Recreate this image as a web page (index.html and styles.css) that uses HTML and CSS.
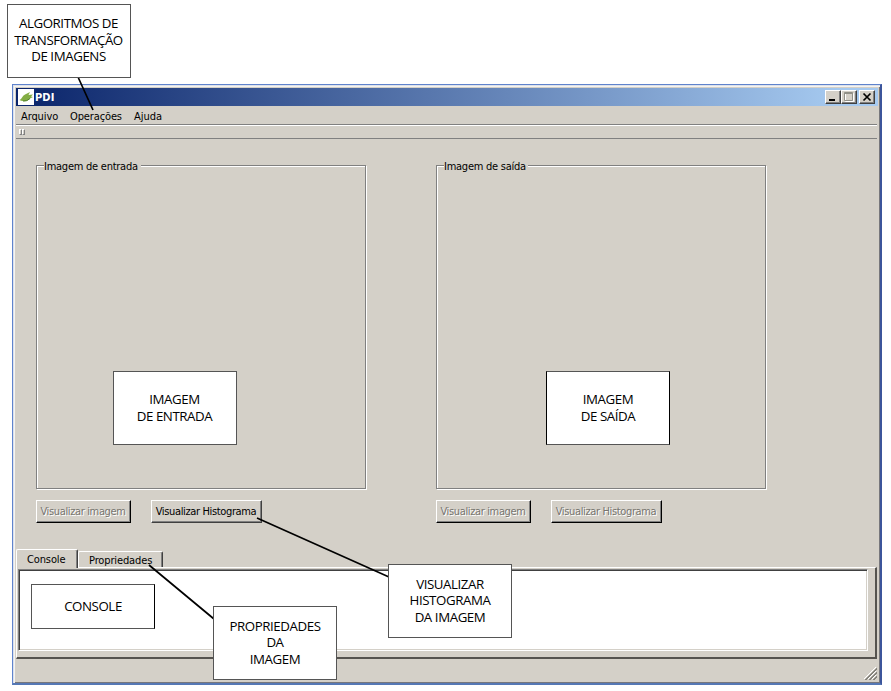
FILE: index.html
```html
<!DOCTYPE html>
<html lang="pt-BR">
<head>
<meta charset="utf-8">
<title>PDI</title>
<link rel="stylesheet" href="styles.css">
</head>
<body>
<main class="window">
  <header class="titlebar">
    <svg class="logo" width="16" height="16" viewBox="0 0 16 16"><rect width="16" height="16" fill="#fff"/><path d="M1.5 11C4 10 4 7 7 5.5L12 3L10.5 6L15 5.5L13 7.5L15 8L12 9.5C10 12 8 12.5 5 12Q3 12 1.5 11Z" fill="#83ad43"/><path d="M5 12Q9 12.5 12 9.5" fill="none" stroke="#52812d"/></svg>
    <span class="title">PDI</span>
    <div class="controls">
      <span class="ctl"><svg width="14" height="12"><path d="M3 9H9" stroke="#000" stroke-width="2"/></svg></span>
      <span class="ctl"><svg width="14" height="12" fill="none"><path d="M3 2.5H11.5V10.5H3.5V2" stroke="#fff"/><path d="M2.5 1.5H10.5V9.5H2.5ZM2 2.5H11" stroke="#919088"/></svg></span>
      <span class="ctl close"><svg width="14" height="12"><path d="M3.5 2.5L10.5 9.5M10.5 2.5L3.5 9.5" stroke="#000" stroke-width="1.7"/></svg></span>
    </div>
  </header>
  <nav class="menu"><span class="m1">Arquivo</span><span class="m2">Operações</span><span class="m3">Ajuda</span></nav>
  <div class="toolbar"><i></i><i></i></div>
  <section class="workspace">
    <div class="column">
      <div class="group"><span class="legend in">Imagem de entrada</span></div>
      <div class="actions"><button class="view off" disabled>Visualizar imagem</button><button class="hist">Visualizar Histograma</button></div>
    </div>
    <div class="column">
      <div class="group"><span class="legend out">Imagem de saída</span></div>
      <div class="actions"><button class="view off" disabled>Visualizar imagem</button><button class="hist off" disabled>Visualizar Histograma</button></div>
    </div>
  </section>
  <div class="tabs"><span class="tab active">Console</span><span class="tab second">Propriedades</span></div>
  <section class="panel"><div class="output"></div></section>
  <footer class="status"><svg width="13" height="13" viewBox="0 0 13 13"><path d="M0 12L12 0M4 12L12 4M8 12L12 8" stroke="#fff" stroke-width="1"/><path d="M1 13L13 1M2 13L13 2M5 13L13 5M6 13L13 6M9 13L13 9M10 13L13 10" stroke="#85837c" stroke-width="1"/></svg></footer>
</main>
<svg class="leaders" width="891" height="691"><path d="M78 77L93 110M257 518L389 577M149 565L214 619" fill="none" stroke="#000" stroke-width="1.7"/></svg>
<div class="note n1"><span>ALGORITMOS DE</span><span>TRANSFORMAÇÃO</span><span>DE IMAGENS</span></div>
<div class="note n2"><span>IMAGEM</span><span>DE ENTRADA</span></div>
<div class="note n3"><span>IMAGEM</span><span>DE SAÍDA</span></div>
<div class="note n4"><span>CONSOLE</span></div>
<div class="note n5"><span>PROPRIEDADES</span><span>DA</span><span>IMAGEM</span></div>
<div class="note n6"><span>VISUALIZAR</span><span>HISTOGRAMA</span><span>DA IMAGEM</span></div>
</body>
</html>
```
FILE: styles.css
```css
* { box-sizing: border-box; }
body { margin: 0; padding: 84px 0 0 12px; width: 891px; height: 691px; overflow: hidden; background: #fff; font: 11px/14px "DejaVu Sans Condensed", "DejaVu Sans", sans-serif; font-stretch: condensed; color: #000; }
svg { display: block; }
.window { display: flex; flex-direction: column; width: 870px; height: 601px; background: #d4d0c8; border: 1px solid #5f83cc; border-right: 2px solid #3c559b; border-bottom: 2px solid #5578b5; padding: 3px 3px 0; box-shadow: inset 1px 1px #dce1eb, inset 2px 2px #f5f4f1, inset -1px -1px #77777c; }
.titlebar { display: flex; align-items: center; height: 18px; width: 862px; flex: none; padding: 0 3px 0 2px; background: linear-gradient(90deg, #0a246a, #a6caf0 96%); }
.title { color: #fff; font: bold 11px/16px "DejaVu Sans Condensed", sans-serif; font-stretch: condensed; margin: 1px 0 0 1px; letter-spacing: .1px; }
.controls { display: flex; margin-left: auto; }
.ctl { width: 16px; height: 14px; background: #d4d0c8; border: 1px solid; border-color: #fff #404040 #404040 #fff; box-shadow: inset -1px -1px #808080; }
.close { margin-left: 2px; }
.menu { display: flex; height: 18px; padding: 4px 0 0 5px; line-height: 14px; white-space: nowrap; }
.m1 { width: 49px; letter-spacing: -.1px; }
.m2 { width: 64px; letter-spacing: -.13px; }
.m3 { letter-spacing: -.05px; }
.toolbar { display: flex; gap: 0; height: 15px; flex: none; width: 861px; border-top: 1px solid #808080; border-bottom: 1px solid #808080; box-shadow: inset 0 1px #fff; padding: 4px 0 0 3px; }
.toolbar i { width: 3px; height: 6px; border: 1px solid; border-color: #fff #808080 #808080 #fff; }
.workspace { display: flex; gap: 70px; height: 410px; padding: 26px 0 0 20px; }
.column { width: 330px; }
.group { width: 330px; height: 324px; border: 1px solid #808080; box-shadow: 1px 1px #fff, inset 1px 1px #fff; }
.legend { display: block; margin: -6px 0 0 7px; height: 14px; line-height: 14px; background: #d4d0c8; white-space: nowrap; letter-spacing: -.25px; }
.in { width: 97px; }
.out { width: 84px; }
.actions { display: flex; gap: 20px; margin-top: 11px; }
button { height: 23px; padding: 1px 1px 0 0; border: 1px solid; border-color: #fff #404040 #404040 #fff; box-shadow: inset -1px -1px #808080; background: #d4d0c8; color: #000; font: inherit; white-space: nowrap; letter-spacing: -.36px; }
.view { width: 95px; }
.hist { width: 111px; }
.off { color: #77756f; text-shadow: 1px 1px #fff; border-right-color: #000; border-bottom-color: #000; }
.tabs { display: flex; align-items: flex-end; height: 18px; flex: none; }
.tab { height: 16px; border: 1px solid #fff; border-bottom: 0; border-right-color: #404040; border-radius: 2px 2px 0 0; box-shadow: inset -1px 0 #808080; padding: 2px 0 0 10px; letter-spacing: -.13px; white-space: nowrap; }
.active { width: 62px; height: 19px; padding: 3px 0 0 10px; margin-bottom: -1px; background: #d4d0c8; position: relative; z-index: 1; }
.second { width: 85px; }
.panel { width: 861px; height: 92px; flex: none; border: 1px solid #fff; border-right: 2px solid #55534f; border-bottom: 2px solid #55534f; padding: 1px 7px 7px 1px; }
.output { height: 82px; background: #fff; border: 1px solid #808080; border-right-color: #fff; border-bottom-color: #fff; box-shadow: inset 1px 1px #404040, inset -1px -1px #d4d0c8; }
.status { flex: 1; display: flex; justify-content: flex-end; align-items: flex-end; padding: 0 0 3px; }
.leaders { position: absolute; left: 0; top: 0; pointer-events: none; }
.note { position: absolute; display: flex; flex-direction: column; align-items: center; justify-content: center; width: 124px; height: 74px; padding-bottom: 1px; background: #fff; border: 1px solid #555; font: 13.3px/16.6px "Open Sans", "Noto Sans", sans-serif; letter-spacing: -.43px; white-space: nowrap; }
.n1 { left: 7px; top: 4px; padding-right: 1px; padding-bottom: 2px; }
.n2 { left: 113px; top: 371px; padding-right: 1px; }
.n3 { left: 546px; top: 371px; border-left-color: #000; border-right-color: #000; }
.n4 { left: 31px; top: 584px; height: 45px; border-right-color: #000; }
.n5 { left: 213px; top: 606px; }
.n6 { left: 388px; top: 564px; }
```
